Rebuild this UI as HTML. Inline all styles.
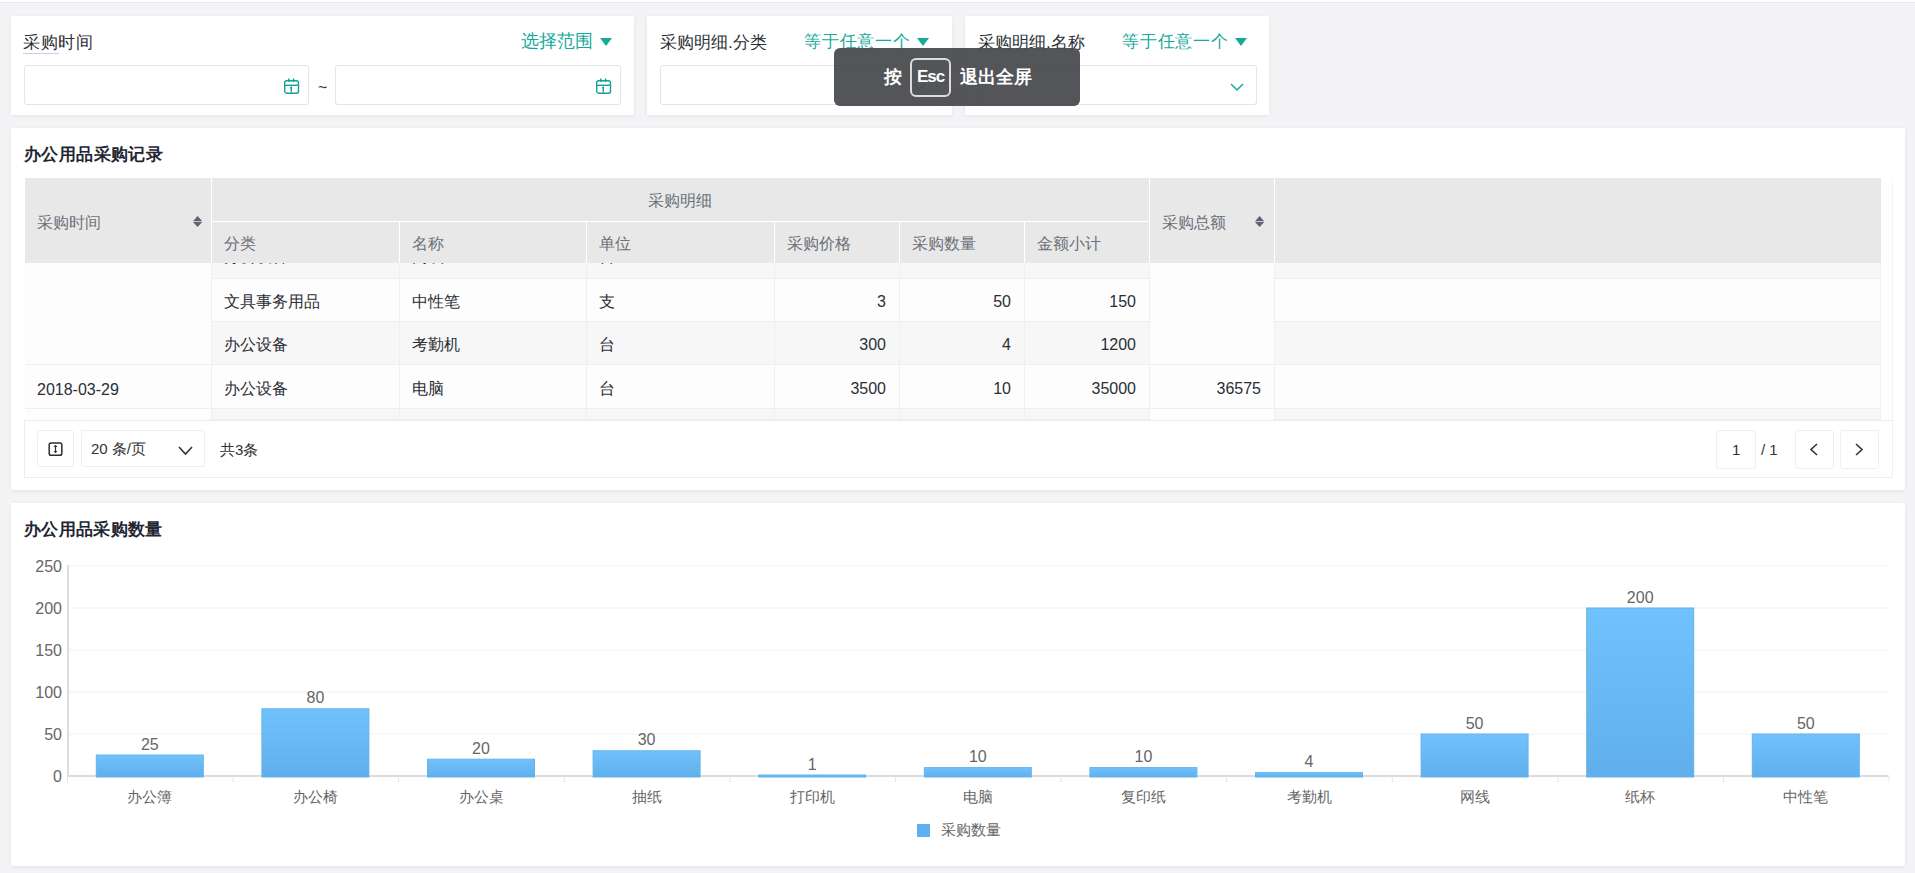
<!DOCTYPE html>
<html><head><meta charset="utf-8">
<style>
*{box-sizing:border-box;margin:0;padding:0}
html,body{width:1915px;height:873px;overflow:hidden;background:#f4f4f7;font-family:"Liberation Sans",sans-serif;color:#2b2f36}
.topline{position:absolute;left:0;top:0;width:1915px;height:2px;background:#fff}
.topline2{position:absolute;left:0;top:2px;width:1915px;height:1px;background:#e9eaed}
.card{position:absolute;background:#fff;box-shadow:0 1px 4px rgba(0,0,0,0.07)}
.t{position:absolute;white-space:nowrap;line-height:1}
.teal{color:#17a99b}
.inp{position:absolute;border:1px solid #e4e4e6;border-radius:3px;background:#fff}
.tri{position:absolute;width:0;height:0;border-left:6px solid transparent;border-right:6px solid transparent;border-top:8px solid #17a99b}
.r{position:absolute}
.ht{position:absolute;white-space:nowrap;line-height:1;font-size:16px;color:#6b7079}
.bt{position:absolute;white-space:nowrap;line-height:1;font-size:16px;color:#2b2f36}
.btn{position:absolute;border:1px solid #efefef;border-radius:3px;background:#fff}
.ax{position:absolute;white-space:nowrap;line-height:1;font-size:15px;color:#666}
svg{position:absolute;overflow:visible}
</style></head><body>
<div class="topline"></div><div class="topline2"></div>

<div class="card" style="left:11px;top:16px;width:623px;height:99px"></div>
<div class="t" style="left:23px;top:34px;font-size:17px;letter-spacing:0.6px;color:#2b2f36">采购时间</div>
<div class="t teal" style="left:521px;top:32px;font-size:18px">选择范围</div>
<div class="tri" style="left:600px;top:38px"></div>
<div class="r" style="left:23px;top:53px;width:36px;height:1px;background:rgba(120,150,210,0.45)"></div>
<div class="inp" style="left:24px;top:65px;width:285px;height:40px"></div>
<svg style="left:284px;top:78px" width="16" height="17" viewBox="0 0 16 17"><rect x="0.7" y="2.8" width="13.8" height="12.4" rx="2" fill="none" stroke="#14a092" stroke-width="1.4"/><line x1="0.7" y1="7.3" x2="14.5" y2="7.3" stroke="#14a092" stroke-width="1.4"/><line x1="4.8" y1="0.5" x2="4.8" y2="4" stroke="#14a092" stroke-width="1.4"/><line x1="9.5" y1="0.5" x2="9.5" y2="4" stroke="#14a092" stroke-width="1.4"/><path d="M5.9 10.2 L7.3 9.3 V14.5" fill="none" stroke="#14a092" stroke-width="1.3"/></svg>
<div class="t" style="left:318px;top:79.5px;font-size:16px;color:#333">~</div>
<div class="inp" style="left:335px;top:65px;width:286px;height:40px"></div>
<svg style="left:596px;top:78px" width="16" height="17" viewBox="0 0 16 17"><rect x="0.7" y="2.8" width="13.8" height="12.4" rx="2" fill="none" stroke="#14a092" stroke-width="1.4"/><line x1="0.7" y1="7.3" x2="14.5" y2="7.3" stroke="#14a092" stroke-width="1.4"/><line x1="4.8" y1="0.5" x2="4.8" y2="4" stroke="#14a092" stroke-width="1.4"/><line x1="9.5" y1="0.5" x2="9.5" y2="4" stroke="#14a092" stroke-width="1.4"/><path d="M5.9 10.2 L7.3 9.3 V14.5" fill="none" stroke="#14a092" stroke-width="1.3"/></svg>
<div class="card" style="left:647px;top:16px;width:305px;height:99px"></div>
<div class="t" style="left:660px;top:34px;font-size:17px;color:#2b2f36">采购明细.分类</div>
<div class="t teal" style="left:804px;top:33px;font-size:17px;letter-spacing:0.8px">等于任意一个</div>
<div class="tri" style="left:917px;top:38px"></div>
<div class="inp" style="left:660px;top:65px;width:279px;height:40px"></div>
<svg style="left:912px;top:83px" width="14" height="8" viewBox="0 0 14 8"><path d="M1 1 L7.0 7 L13 1" fill="none" stroke="#17a99b" stroke-width="1.5"/></svg>
<div class="card" style="left:965px;top:16px;width:304px;height:99px"></div>
<div class="t" style="left:978px;top:34px;font-size:17px;color:#2b2f36">采购明细.名称</div>
<div class="t teal" style="left:1122px;top:33px;font-size:17px;letter-spacing:0.8px">等于任意一个</div>
<div class="tri" style="left:1235px;top:38px"></div>
<div class="inp" style="left:978px;top:65px;width:279px;height:40px"></div>
<svg style="left:1230px;top:83px" width="14" height="8" viewBox="0 0 14 8"><path d="M1 1 L7.0 7 L13 1" fill="none" stroke="#17a99b" stroke-width="1.5"/></svg>
<div class="card" style="left:11px;top:128px;width:1894px;height:362px"></div>
<div class="t" style="left:24px;top:146px;font-size:17px;letter-spacing:0.4px;font-weight:bold;color:#1f2633">办公用品采购记录</div>
<div class="r" style="left:25px;top:178px;width:1856px;height:85px;background:#e8e8e8"></div>
<div class="r" style="left:211px;top:178px;width:1px;height:85px;background:#fff"></div>
<div class="r" style="left:1149px;top:178px;width:1px;height:85px;background:#fff"></div>
<div class="r" style="left:1274px;top:178px;width:1px;height:85px;background:#fff"></div>
<div class="r" style="left:211px;top:221px;width:938px;height:1px;background:#fff"></div>
<div class="r" style="left:399px;top:222px;width:1px;height:41px;background:#fff"></div>
<div class="r" style="left:586px;top:222px;width:1px;height:41px;background:#fff"></div>
<div class="r" style="left:774px;top:222px;width:1px;height:41px;background:#fff"></div>
<div class="r" style="left:899px;top:222px;width:1px;height:41px;background:#fff"></div>
<div class="r" style="left:1024px;top:222px;width:1px;height:41px;background:#fff"></div>
<div class="ht" style="left:37px;top:215px">采购时间</div>
<div class="ht" style="left:648px;top:193px">采购明细</div>
<div class="ht" style="left:224px;top:236px">分类</div>
<div class="ht" style="left:412px;top:236px">名称</div>
<div class="ht" style="left:599px;top:236px">单位</div>
<div class="ht" style="left:787px;top:236px">采购价格</div>
<div class="ht" style="left:912px;top:236px">采购数量</div>
<div class="ht" style="left:1037px;top:236px">金额小计</div>
<div class="ht" style="left:1162px;top:215px">采购总额</div>
<svg style="left:193px;top:216px" width="10" height="12" viewBox="0 0 10 12"><path d="M4.6 0 L9.2 5.3 H0 Z M4.6 11 L9.2 6 H0 Z" fill="#5d6370"/></svg>
<svg style="left:1255px;top:216px" width="10" height="12" viewBox="0 0 10 12"><path d="M4.6 0 L9.2 5.3 H0 Z M4.6 11 L9.2 6 H0 Z" fill="#5d6370"/></svg>
<div class="r" style="left:25px;top:263px;width:1856px;height:157px;overflow:hidden">
<div class="r" style="left:186px;top:0px;width:938px;height:16px;background:#f7f7f7;border-bottom:1px solid #efefef"></div>
<div class="r" style="left:1249px;top:0px;width:607px;height:16px;background:#f7f7f7;border-bottom:1px solid #efefef"></div>
<div class="r" style="left:186px;top:16px;width:938px;height:43px;background:#fdfdfd;border-bottom:1px solid #efefef"></div>
<div class="r" style="left:1249px;top:16px;width:607px;height:43px;background:#fdfdfd;border-bottom:1px solid #efefef"></div>
<div class="r" style="left:186px;top:59px;width:938px;height:43px;background:#f7f7f7;border-bottom:1px solid #efefef"></div>
<div class="r" style="left:1249px;top:59px;width:607px;height:43px;background:#f7f7f7;border-bottom:1px solid #efefef"></div>
<div class="r" style="left:186px;top:102px;width:938px;height:44px;background:#fdfdfd;border-bottom:1px solid #efefef"></div>
<div class="r" style="left:1249px;top:102px;width:607px;height:44px;background:#fdfdfd;border-bottom:1px solid #efefef"></div>
<div class="r" style="left:186px;top:146px;width:938px;height:11px;background:#f7f7f7;border-bottom:1px solid #efefef"></div>
<div class="r" style="left:1249px;top:146px;width:607px;height:11px;background:#f7f7f7;border-bottom:1px solid #efefef"></div>
<div class="r" style="left:0px;top:0px;width:186px;height:102px;background:#fdfdfd;border-bottom:1px solid #efefef"></div>
<div class="r" style="left:0px;top:102px;width:186px;height:44px;background:#fdfdfd;border-bottom:1px solid #efefef"></div>
<div class="r" style="left:0px;top:146px;width:186px;height:11px;background:#fdfdfd"></div>
<div class="r" style="left:1124px;top:0px;width:125px;height:102px;background:#fdfdfd;border-bottom:1px solid #efefef"></div>
<div class="r" style="left:1124px;top:102px;width:125px;height:44px;background:#fdfdfd;border-bottom:1px solid #efefef"></div>
<div class="r" style="left:1124px;top:146px;width:125px;height:11px;background:#fdfdfd"></div>
<div class="r" style="left:186px;top:0px;width:1px;height:157px;background:#efefef"></div>
<div class="r" style="left:374px;top:0px;width:1px;height:157px;background:#efefef"></div>
<div class="r" style="left:561px;top:0px;width:1px;height:157px;background:#efefef"></div>
<div class="r" style="left:749px;top:0px;width:1px;height:157px;background:#efefef"></div>
<div class="r" style="left:874px;top:0px;width:1px;height:157px;background:#efefef"></div>
<div class="r" style="left:999px;top:0px;width:1px;height:157px;background:#efefef"></div>
<div class="r" style="left:1124px;top:0px;width:1px;height:157px;background:#efefef"></div>
<div class="r" style="left:1249px;top:0px;width:1px;height:157px;background:#efefef"></div>
<div class="bt" style="left:199px;top:-14.5px">办公设备</div>
<div class="bt" style="left:387px;top:-14.5px">网线</div>
<div class="bt" style="left:574px;top:-14.5px">台</div>
<div class="bt" style="left:199px;top:31px">文具事务用品</div>
<div class="bt" style="left:387px;top:31px">中性笔</div>
<div class="bt" style="left:574px;top:31px">支</div>
<div class="bt" style="right:995px;top:31px">3</div>
<div class="bt" style="right:870px;top:31px">50</div>
<div class="bt" style="right:745px;top:31px">150</div>
<div class="bt" style="left:199px;top:74px">办公设备</div>
<div class="bt" style="left:387px;top:74px">考勤机</div>
<div class="bt" style="left:574px;top:74px">台</div>
<div class="bt" style="right:995px;top:74px">300</div>
<div class="bt" style="right:870px;top:74px">4</div>
<div class="bt" style="right:745px;top:74px">1200</div>
<div class="bt" style="left:199px;top:118px">办公设备</div>
<div class="bt" style="left:387px;top:118px">电脑</div>
<div class="bt" style="left:574px;top:118px">台</div>
<div class="bt" style="right:995px;top:118px">3500</div>
<div class="bt" style="right:870px;top:118px">10</div>
<div class="bt" style="right:745px;top:118px">35000</div>
<div class="bt" style="left:12px;top:119px">2018-03-29</div>
<div class="bt" style="right:620px;top:118px">36575</div>
</div>
<div class="r" style="left:1880px;top:263px;width:1px;height:157px;background:#f0f0f0"></div>
<div class="r" style="left:1892px;top:178px;width:1px;height:242px;background:#f5f5f5"></div>
<div class="r" style="left:24px;top:420px;width:1869px;height:58px;border:1px solid #ededed;border-right-color:#f0f0f0"></div>
<div class="btn" style="left:37px;top:430px;width:37px;height:37px"></div>
<svg style="left:48px;top:442px" width="15" height="14" viewBox="0 0 15 14"><rect x="1.2" y="0.9" width="12.6" height="12.4" rx="1.8" fill="none" stroke="#2f2f2f" stroke-width="1.5"/><path d="M7.5 3.6 V10.4" fill="none" stroke="#2f2f2f" stroke-width="1.2"/><path d="M5.6 4.9 L7.5 2.8 L9.4 4.9 Z M5.6 9.1 L7.5 11.2 L9.4 9.1 Z" fill="#2f2f2f"/></svg>
<div class="btn" style="left:81px;top:430px;width:124px;height:37px"></div>
<div class="t" style="left:91px;top:441px;font-size:15px;color:#333">20 条/页</div>
<svg style="left:178px;top:446px" width="15" height="9" viewBox="0 0 15 9"><path d="M1 1 L7.5 8 L14 1" fill="none" stroke="#333" stroke-width="1.6"/></svg>
<div class="t" style="left:220px;top:442px;font-size:15px;color:#333">共3条</div>
<div class="btn" style="left:1716px;top:430px;width:40px;height:39px"></div>
<div class="t" style="left:1732px;top:442px;font-size:15px;color:#333">1</div>
<div class="t" style="left:1761px;top:442px;font-size:15px;color:#333">/ 1</div>
<div class="btn" style="left:1795px;top:430px;width:39px;height:39px"></div>
<div class="btn" style="left:1840px;top:430px;width:39px;height:39px"></div>
<svg style="left:1809px;top:443px" width="9" height="13" viewBox="0 0 9 13"><path d="M8 1 L2 6.5 L8 12" fill="none" stroke="#333" stroke-width="1.6"/></svg>
<svg style="left:1855px;top:443px" width="9" height="13" viewBox="0 0 9 13"><path d="M1 1 L7 6.5 L1 12" fill="none" stroke="#333" stroke-width="1.6"/></svg>
<div class="card" style="left:11px;top:503px;width:1894px;height:363px"></div>
<div class="t" style="left:24px;top:521px;font-size:17px;letter-spacing:0.35px;font-weight:bold;color:#1f2633">办公用品采购数量</div>
<svg style="left:0;top:0" width="1915" height="873" viewBox="0 0 1915 873">
<defs><linearGradient id="g" x1="0" y1="0" x2="0" y2="1"><stop offset="0" stop-color="#70c2fc"/><stop offset="1" stop-color="#60afeb"/></linearGradient></defs>
<line x1="67" y1="734.0" x2="1888.6" y2="734.0" stroke="#f0f0f0" stroke-width="1"/>
<line x1="67" y1="692.0" x2="1888.6" y2="692.0" stroke="#f0f0f0" stroke-width="1"/>
<line x1="67" y1="650.0" x2="1888.6" y2="650.0" stroke="#f0f0f0" stroke-width="1"/>
<line x1="67" y1="608.0" x2="1888.6" y2="608.0" stroke="#f0f0f0" stroke-width="1"/>
<line x1="67" y1="566.0" x2="1888.6" y2="566.0" stroke="#f0f0f0" stroke-width="1"/>
<line x1="68" y1="565" x2="68" y2="777" stroke="#dddddd" stroke-width="2"/>
<line x1="67.50" y1="776" x2="67.50" y2="782" stroke="#e6e6e6" stroke-width="1"/>
<line x1="233.10" y1="776" x2="233.10" y2="782" stroke="#e6e6e6" stroke-width="1"/>
<line x1="398.70" y1="776" x2="398.70" y2="782" stroke="#e6e6e6" stroke-width="1"/>
<line x1="564.30" y1="776" x2="564.30" y2="782" stroke="#e6e6e6" stroke-width="1"/>
<line x1="729.90" y1="776" x2="729.90" y2="782" stroke="#e6e6e6" stroke-width="1"/>
<line x1="895.50" y1="776" x2="895.50" y2="782" stroke="#e6e6e6" stroke-width="1"/>
<line x1="1061.10" y1="776" x2="1061.10" y2="782" stroke="#e6e6e6" stroke-width="1"/>
<line x1="1226.70" y1="776" x2="1226.70" y2="782" stroke="#e6e6e6" stroke-width="1"/>
<line x1="1392.30" y1="776" x2="1392.30" y2="782" stroke="#e6e6e6" stroke-width="1"/>
<line x1="1557.90" y1="776" x2="1557.90" y2="782" stroke="#e6e6e6" stroke-width="1"/>
<line x1="1723.50" y1="776" x2="1723.50" y2="782" stroke="#e6e6e6" stroke-width="1"/>
<line x1="1889.10" y1="776" x2="1889.10" y2="782" stroke="#e6e6e6" stroke-width="1"/>
<line x1="67" y1="776" x2="1888.6" y2="776" stroke="#dcdcdc" stroke-width="2"/>
<rect x="96.30" y="755.00" width="107" height="22.00" fill="url(#g)" stroke="#64b2ec" stroke-width="1"/>
<rect x="261.90" y="708.80" width="107" height="68.20" fill="url(#g)" stroke="#64b2ec" stroke-width="1"/>
<rect x="427.50" y="759.20" width="107" height="17.80" fill="url(#g)" stroke="#64b2ec" stroke-width="1"/>
<rect x="593.10" y="750.80" width="107" height="26.20" fill="url(#g)" stroke="#64b2ec" stroke-width="1"/>
<rect x="758.70" y="775.00" width="107" height="2.00" fill="url(#g)" stroke="#64b2ec" stroke-width="1"/>
<rect x="924.30" y="767.60" width="107" height="9.40" fill="url(#g)" stroke="#64b2ec" stroke-width="1"/>
<rect x="1089.90" y="767.60" width="107" height="9.40" fill="url(#g)" stroke="#64b2ec" stroke-width="1"/>
<rect x="1255.50" y="772.64" width="107" height="4.36" fill="url(#g)" stroke="#64b2ec" stroke-width="1"/>
<rect x="1421.10" y="734.00" width="107" height="43.00" fill="url(#g)" stroke="#64b2ec" stroke-width="1"/>
<rect x="1586.70" y="608.00" width="107" height="169.00" fill="url(#g)" stroke="#64b2ec" stroke-width="1"/>
<rect x="1752.30" y="734.00" width="107" height="43.00" fill="url(#g)" stroke="#64b2ec" stroke-width="1"/>
<text x="62" y="781.5" text-anchor="end" font-size="16" fill="#666" font-family="Liberation Sans">0</text>
<text x="62" y="739.5" text-anchor="end" font-size="16" fill="#666" font-family="Liberation Sans">50</text>
<text x="62" y="697.5" text-anchor="end" font-size="16" fill="#666" font-family="Liberation Sans">100</text>
<text x="62" y="655.5" text-anchor="end" font-size="16" fill="#666" font-family="Liberation Sans">150</text>
<text x="62" y="613.5" text-anchor="end" font-size="16" fill="#666" font-family="Liberation Sans">200</text>
<text x="62" y="571.5" text-anchor="end" font-size="16" fill="#666" font-family="Liberation Sans">250</text>
<text x="149.8" y="749.5" text-anchor="middle" font-size="16" fill="#666" font-family="Liberation Sans">25</text>
<text x="149.8" y="801.5" text-anchor="middle" font-size="15" fill="#666" font-family="Liberation Sans">办公簿</text>
<text x="315.4" y="703.3" text-anchor="middle" font-size="16" fill="#666" font-family="Liberation Sans">80</text>
<text x="315.4" y="801.5" text-anchor="middle" font-size="15" fill="#666" font-family="Liberation Sans">办公椅</text>
<text x="481.0" y="753.7" text-anchor="middle" font-size="16" fill="#666" font-family="Liberation Sans">20</text>
<text x="481.0" y="801.5" text-anchor="middle" font-size="15" fill="#666" font-family="Liberation Sans">办公桌</text>
<text x="646.6" y="745.3" text-anchor="middle" font-size="16" fill="#666" font-family="Liberation Sans">30</text>
<text x="646.6" y="801.5" text-anchor="middle" font-size="15" fill="#666" font-family="Liberation Sans">抽纸</text>
<text x="812.2" y="769.7" text-anchor="middle" font-size="16" fill="#666" font-family="Liberation Sans">1</text>
<text x="812.2" y="801.5" text-anchor="middle" font-size="15" fill="#666" font-family="Liberation Sans">打印机</text>
<text x="977.8" y="762.1" text-anchor="middle" font-size="16" fill="#666" font-family="Liberation Sans">10</text>
<text x="977.8" y="801.5" text-anchor="middle" font-size="15" fill="#666" font-family="Liberation Sans">电脑</text>
<text x="1143.4" y="762.1" text-anchor="middle" font-size="16" fill="#666" font-family="Liberation Sans">10</text>
<text x="1143.4" y="801.5" text-anchor="middle" font-size="15" fill="#666" font-family="Liberation Sans">复印纸</text>
<text x="1309.0" y="767.1" text-anchor="middle" font-size="16" fill="#666" font-family="Liberation Sans">4</text>
<text x="1309.0" y="801.5" text-anchor="middle" font-size="15" fill="#666" font-family="Liberation Sans">考勤机</text>
<text x="1474.6" y="728.5" text-anchor="middle" font-size="16" fill="#666" font-family="Liberation Sans">50</text>
<text x="1474.6" y="801.5" text-anchor="middle" font-size="15" fill="#666" font-family="Liberation Sans">网线</text>
<text x="1640.2" y="602.5" text-anchor="middle" font-size="16" fill="#666" font-family="Liberation Sans">200</text>
<text x="1640.2" y="801.5" text-anchor="middle" font-size="15" fill="#666" font-family="Liberation Sans">纸杯</text>
<text x="1805.8" y="728.5" text-anchor="middle" font-size="16" fill="#666" font-family="Liberation Sans">50</text>
<text x="1805.8" y="801.5" text-anchor="middle" font-size="15" fill="#666" font-family="Liberation Sans">中性笔</text>
<rect x="917" y="824" width="13" height="13" fill="#5fb0ee"/>
<text x="941" y="834.5" font-size="15" fill="#666" font-family="Liberation Sans">采购数量</text>
</svg>
<div class="r" style="left:834px;top:48px;width:246px;height:58px;border-radius:6px;background:rgba(72,74,79,0.94)"></div>
<div class="t" style="left:884px;top:68px;font-size:18px;font-weight:bold;color:#fff">按</div>
<div class="r" style="left:910px;top:58px;width:41px;height:39px;border:2px solid #dcdcdc;border-radius:6px"></div>
<div class="t" style="left:917px;top:68px;font-size:17px;font-weight:bold;color:#fff;letter-spacing:-1px">Esc</div>
<div class="t" style="left:960px;top:68px;font-size:18px;font-weight:bold;color:#fff">退出全屏</div>
</body></html>
